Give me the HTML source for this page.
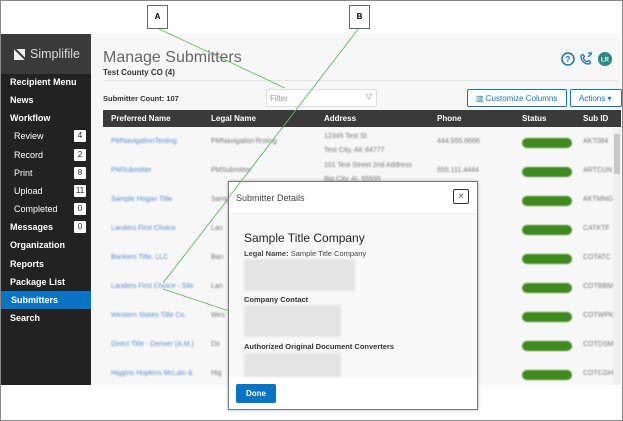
<!DOCTYPE html><html><head><style>
*{margin:0;padding:0;box-sizing:border-box}
body{width:623px;height:421px;overflow:hidden;background:#fff;font-family:"Liberation Sans",sans-serif;position:relative}
.frame{position:absolute;left:0;top:0;width:623px;height:421px;border:1px solid #888;}
.side{position:absolute;left:1px;top:34px;width:90px;height:351px;background:#222}
.logo{height:40px;background:#3a3a3a;color:#ddd;font-size:12.5px;display:flex;align-items:center;padding-left:13px}
.logo i{display:inline-block;width:11px;height:11px;background:#eee;margin-right:5px;position:relative;overflow:hidden}
.logo i:after{content:"";position:absolute;left:-2px;top:5px;width:18px;height:2px;background:#3a3a3a;transform:rotate(45deg)}
.nav{position:absolute;left:0;width:90px;height:18px;color:#fff;font-size:9px;font-weight:bold;padding-left:10px;line-height:18px}
.nav.sub{font-weight:normal;padding-left:14px}
.nav b{position:absolute;right:4px;top:3px;width:12px;height:12px;background:#fff;color:#222;font-size:8px;font-weight:normal;text-align:center;line-height:12px;border-radius:1px}
.main{position:absolute;left:91px;top:34px;width:530px;height:351px;background:#f7f7f7}
.blur{filter:blur(0.9px)}
.row{position:absolute;left:12px;width:510px;height:29px;}
.cell{position:absolute;font-size:7px;top:10px;color:#777}
.pill{position:absolute;left:419px;top:10px;width:50px;height:10px;border-radius:5px;background:#3f8a1f}
</style></head><body>
<div class="side">
<div class="logo"><i></i>Simplifile</div>
</div>
<div class="nav" style="top:73px">Recipient Menu</div>
<div class="nav" style="top:91px">News</div>
<div class="nav" style="top:109px">Workflow</div>
<div class="nav sub" style="top:127px">Review<b>4</b></div>
<div class="nav sub" style="top:146px">Record<b>2</b></div>
<div class="nav sub" style="top:164px">Print<b>8</b></div>
<div class="nav sub" style="top:182px">Upload<b>11</b></div>
<div class="nav sub" style="top:200px">Completed<b>0</b></div>
<div class="nav" style="top:218px">Messages<b>0</b></div>
<div class="nav" style="top:236px">Organization</div>
<div class="nav" style="top:255px">Reports</div>
<div class="nav" style="top:273px">Package List</div>
<div class="nav" style="top:291px;background:#0a74c4;left:1px;width:90px">Submitters</div>
<div class="nav" style="top:309px">Search</div>

<div class="main">
<div style="position:absolute;left:12px;top:15px;font-size:16px;color:#666">Manage Submitters</div>
<div style="position:absolute;left:12px;top:34px;font-size:8px;color:#333;font-weight:bold">Test County CO (4)</div>
<div style="position:absolute;left:12px;top:46px;width:515px;height:1px;background:#e4e4e4"></div>
<svg style="position:absolute;left:469px;top:17px" width="56" height="16"><circle cx="8" cy="8" r="6" fill="none" stroke="#1a73b8" stroke-width="1.5"/><text x="8" y="11" font-size="8" text-anchor="middle" fill="#1a73b8" font-weight="bold" font-family="Liberation Sans">?</text><path d="M21 5.5c0-1.5 1.5-2.5 2.5-1.5l1 1.5-1.3 1.5c.8 1.8 2 3 3.8 3.8l1.5-1.3 1.5 1c1 1 0 2.5-1.5 2.5-4 0-7.5-3.5-7.5-7.5z M28 2l4-0 M32 2l-4 4" fill="none" stroke="#1a73b8" stroke-width="1.3"/><circle cx="45" cy="8" r="7" fill="#2a8a7f"/><text x="45" y="10.5" font-size="6" text-anchor="middle" fill="#fff" font-weight="bold" font-family="Liberation Sans">LR</text></svg>
<div style="position:absolute;left:12px;top:60px;font-size:7.5px;color:#333;font-weight:bold">Submitter Count: 107</div>
<div style="position:absolute;left:175px;top:55px;width:111px;height:18px;background:#fff;border:1px solid #ddd;border-radius:2px;font-size:8px;color:#999;padding:4px 3px">Filter<span style="position:absolute;right:4px;top:2px;color:#777">▽</span></div>
<div style="position:absolute;left:376px;top:55px;width:100px;height:18px;border:1px solid #1a73b8;border-radius:2px;font-size:8px;color:#1a73b8;padding:4px 0 0 8px;background:#fff">▥ Customize Columns</div>
<div style="position:absolute;left:479px;top:55px;width:52px;height:18px;border:1px solid #1a73b8;border-radius:2px;font-size:8px;color:#1a73b8;padding:4px 0 0 8px;background:#fff">Actions ▾</div>
<div style="position:absolute;left:12px;top:76px;width:518px;height:17px;background:#3a3a3a;color:#fff;font-size:8px;font-weight:bold">
<span style="position:absolute;left:8px;top:4px">Preferred Name</span><span style="position:absolute;left:108px;top:4px">Legal Name</span><span style="position:absolute;left:221px;top:4px">Address</span><span style="position:absolute;left:334px;top:4px">Phone</span><span style="position:absolute;left:419px;top:4px">Status</span><span style="position:absolute;left:480px;top:4px">Sub ID</span></div>
<div style="position:absolute;left:522px;top:94px;width:8px;height:257px;background:#f0f0f0"></div>
<div style="position:absolute;left:523px;top:100px;width:6px;height:40px;background:#c8c8c8"></div>
<div class="blur">
<div class="row" style="top:94px"><span class="cell" style="left:8px;color:#5b8fd0">PMNavigationTesting</span><span class="cell" style="left:108px">PMNavigationTesting</span><span class="cell" style="left:221px;top:2px;line-height:14px">12345 Test St<br>Test City, AK 84777</span><span class="cell" style="left:334px">444.555.6666</span><div class="pill"></div><span class="cell" style="left:480px">AKT084</span></div>
<div class="row" style="top:123px"><span class="cell" style="left:8px;color:#5b8fd0">PMSubmitter</span><span class="cell" style="left:108px">PMSubmitter</span><span class="cell" style="left:221px;top:2px;line-height:14px">101 Test Street 2nd Address<br>Big City, AL 55555</span><span class="cell" style="left:334px">555.111.4444</span><div class="pill"></div><span class="cell" style="left:480px">ARTCUN</span></div>
<div class="row" style="top:152px"><span class="cell" style="left:8px;color:#5b8fd0">Sample Hogan Title</span><span class="cell" style="left:108px">Sample</span><div class="pill"></div><span class="cell" style="left:480px">AKTMNG</span></div>
<div class="row" style="top:181px"><span class="cell" style="left:8px;color:#5b8fd0">Landers First Choice</span><span class="cell" style="left:108px">Lan</span><div class="pill"></div><span class="cell" style="left:480px">CATKTF</span></div>
<div class="row" style="top:210px"><span class="cell" style="left:8px;color:#5b8fd0">Bankers Title, LLC</span><span class="cell" style="left:108px">Ban</span><div class="pill"></div><span class="cell" style="left:480px">COTATC</span></div>
<div class="row" style="top:239px"><span class="cell" style="left:8px;color:#5b8fd0">Landers First Choice - Sile</span><span class="cell" style="left:108px">Lan</span><div class="pill"></div><span class="cell" style="left:480px">COTBBM</span></div>
<div class="row" style="top:268px"><span class="cell" style="left:8px;color:#5b8fd0">Western States Title Co.</span><span class="cell" style="left:108px">Wes</span><div class="pill"></div><span class="cell" style="left:480px">COTWPK</span></div>
<div class="row" style="top:297px"><span class="cell" style="left:8px;color:#5b8fd0">Direct Title - Denver (A.M.)</span><span class="cell" style="left:108px">Dir</span><div class="pill"></div><span class="cell" style="left:480px">COTDSM</span></div>
<div class="row" style="top:326px"><span class="cell" style="left:8px;color:#5b8fd0">Higgins Hopkins McLain &amp;</span><span class="cell" style="left:108px">Hig</span><div class="pill"></div><span class="cell" style="left:480px">COTCGH</span></div>
</div>
</div>

<div style="position:absolute;left:228px;top:181px;width:250px;height:229px;border:1px solid #777;background:#fff;box-shadow:0 0 3px rgba(0,0,0,.3)">
<div style="height:32px;border-bottom:1px solid #eee;font-size:9px;color:#444;padding:11px 0 0 7px">Submitter Details</div>
<div style="position:absolute;left:224px;top:7px;width:16px;height:15px;border:1px solid #333;border-radius:2px;font-size:10px;text-align:center;line-height:13px;color:#555">×</div>
<div style="position:absolute;left:0;top:32px;width:248px;height:163px;background:#f9f9f9">
<div style="position:absolute;left:15px;top:17px;font-size:12px;color:#222">Sample Title Company</div>
<div style="position:absolute;left:15px;top:35px;font-size:7.5px;color:#444"><b>Legal Name:</b> Sample Title Company</div>
<div style="position:absolute;left:15px;top:45px;width:111px;height:32px;background:#e4e4e4;filter:blur(1px)"></div>
<div style="position:absolute;left:15px;top:81px;font-size:7.5px;color:#333;font-weight:bold">Company Contact</div>
<div style="position:absolute;left:15px;top:91px;width:97px;height:32px;background:#e4e4e4;filter:blur(1px)"></div>
<div style="position:absolute;left:15px;top:128px;font-size:7.5px;color:#333;font-weight:bold">Authorized Original Document Converters</div>
<div style="position:absolute;left:15px;top:139px;width:97px;height:24px;background:#e4e4e4;filter:blur(1px)"></div>
</div>
<div style="position:absolute;left:7px;top:202px;width:40px;height:19px;background:#0a74c4;border-radius:2px;color:#fff;font-size:8px;font-weight:bold;text-align:center;line-height:19px">Done</div>
</div>

<svg style="position:absolute;left:0;top:0" width="623" height="421">
<line x1="157" y1="28" x2="285" y2="88" stroke="#5cb85c" stroke-width="0.9"/>
<line x1="359" y1="28" x2="229" y2="197" stroke="#5cb85c" stroke-width="0.9"/>
<line x1="228" y1="199" x2="163" y2="283" stroke="#5cb85c" stroke-width="0.9"/>
<line x1="163" y1="289" x2="229" y2="311" stroke="#5cb85c" stroke-width="0.9"/>
<rect x="147.5" y="5.5" width="20" height="23" fill="#fff" stroke="#666"/>
<text x="157.5" y="19" font-size="8" font-weight="bold" text-anchor="middle" font-family="Liberation Sans">A</text>
<rect x="349.5" y="5.5" width="20" height="23" fill="#fff" stroke="#666"/>
<text x="359.5" y="19" font-size="8" font-weight="bold" text-anchor="middle" font-family="Liberation Sans">B</text>
</svg>
<div class="frame"></div>
</body></html>
